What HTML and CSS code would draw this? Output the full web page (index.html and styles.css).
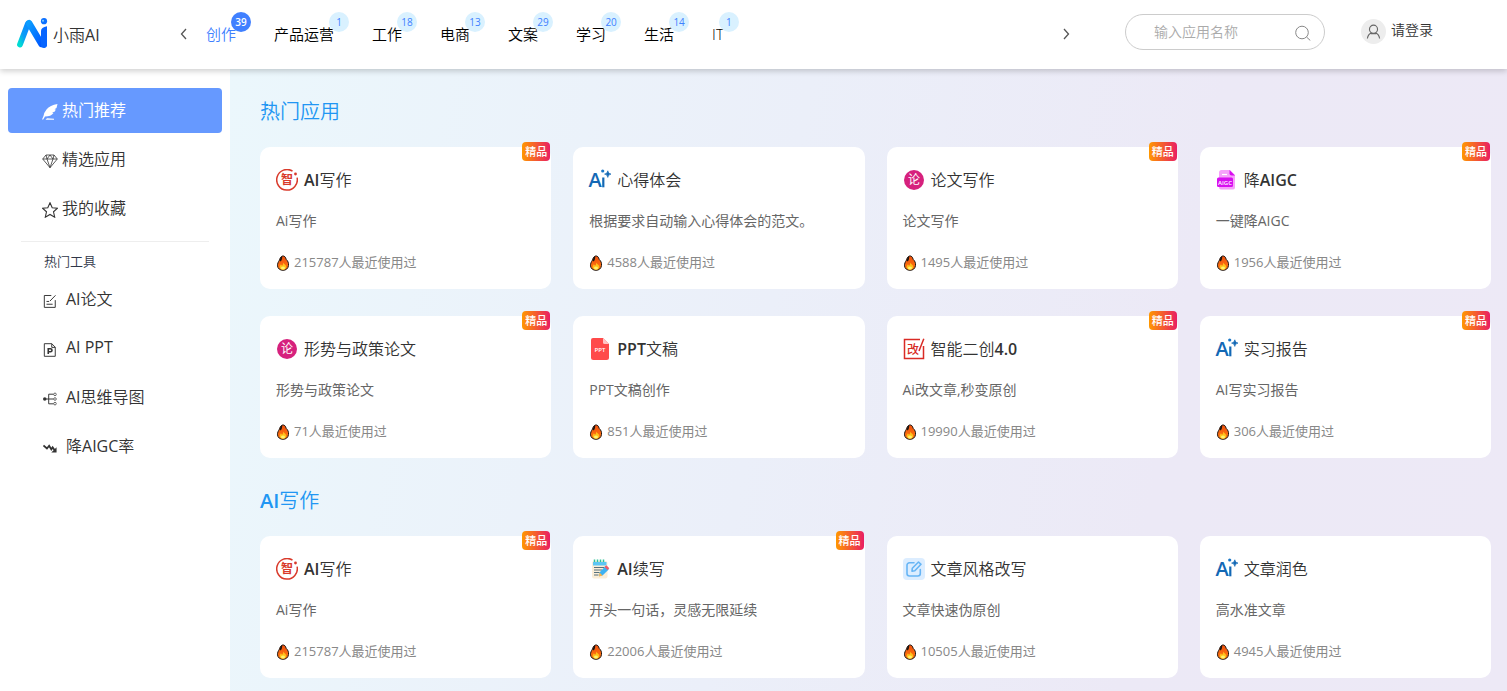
FILE: index.html
```html
<!DOCTYPE html>
<html lang="zh-CN">
<head>
<meta charset="utf-8">
<meta name="viewport" content="width=device-width, initial-scale=1">
<title>小雨AI</title>
<link rel="stylesheet" href="styles.css">
</head>
<body>
<svg class="sprite" aria-hidden="true">
  <defs>
    <linearGradient id="logo-left" x1="0" y1="1" x2="0.7" y2="0"><stop offset="0" stop-color="#00dcd2"/><stop offset="0.5" stop-color="#0a9df5"/><stop offset="1" stop-color="#0a8cff"/></linearGradient>
    <linearGradient id="logo-right" x1="0" y1="0" x2="1" y2="1"><stop offset="0" stop-color="#0a9dff"/><stop offset="1" stop-color="#0058ff"/></linearGradient>
    <linearGradient id="flame-fill" x1="0" y1="0" x2="0" y2="1"><stop offset="0" stop-color="#f0500c"/><stop offset="1" stop-color="#ff7a10"/></linearGradient>
  </defs>
  <symbol id="fire" viewBox="0 0 14 16">
    <path d="M6.500 1C8.500.6 9.600 2.200 10.200 4.400 12 6 12.800 8 12.500 10.500 12.200 13.500 10 15.300 7 15.300S1.700 13.500 1.500 10.800C1.400 8.500 2.300 7 3.200 5.500 3.900 4 4.300 1.800 6.500 1Z" fill="url(#flame-fill)" stroke="#1b1411" stroke-width="1"/>
    <path d="M6.300 1.300C4.200 2.200 4.300 4.200 3.500 5.600L4.700 6.600C5.900 5.300 6.200 3.500 6.300 1.300Z" fill="#1b1411"/>
    <path d="M7.300 7.500C8 9.300 10.500 10 10.200 12.300 9.900 14 8.500 14.700 7 14.700S3.800 13.900 3.700 12.300C3.600 11 4.400 10.300 4.900 9.300L6 10.800C6.900 10 7.200 9 7.300 7.500Z" fill="#ffc21a"/>
    <ellipse cx="7" cy="13" rx="2" ry="1.600" fill="#fff36b"/>
  </symbol>
  <symbol id="zhi" viewBox="0 0 22 22">
    <path d="M16.500 2.100A10.300 10.300 0 1 0 21.100 8.700" fill="none" stroke="#d93a2b" stroke-width="1.500"/>
    <circle cx="19.500" cy="5" r="1.400" fill="#d93a2b"/>
  </symbol>
  <symbol id="aiplus" viewBox="0 0 22 22">
    <path d="M14.300 8.500V18.300" stroke="#1368b5" stroke-width="2.200"/>
    <circle cx="13.700" cy="2" r="1.600" fill="#1b78c8"/>
    <path d="M18.800 1.800Q19.100 4.800 22 5.100 19.100 5.400 18.800 8.400 18.500 5.400 15.600 5.100 18.500 4.800 18.800 1.800Z" fill="#1368b5" stroke="#1368b5" stroke-width=".7"/>
  </symbol>
  <symbol id="lun" viewBox="0 0 22 22">
    <circle cx="11" cy="11" r="10" fill="#d6217d"/>
  </symbol>
  <symbol id="aigc" viewBox="0 0 22 22">
    <path d="M5.500 1H14L19 6V18.500A2 2 0 0 1 17 20.500H5A2 2 0 0 1 3 18.500V3.500A2.500 2.500 0 0 1 5.500 1Z" fill="#f6a0fa"/>
    <path d="M13.500 1 19 6.500H15.500A2 2 0 0 1 13.500 4.500Z" fill="#d80ff0"/>
    <path d="M6 5.500H11" stroke="#fff" stroke-width="1.200"/>
    <rect x="1" y="8.500" width="16" height="9.500" rx="1.500" fill="#d80ff0"/>
  </symbol>
  <symbol id="ppt" viewBox="0 0 22 22">
    <path d="M4 0H14L20 6V19.500A2.500 2.500 0 0 1 17.500 22H4.500A2.500 2.500 0 0 1 2 19.500V2A2 2 0 0 1 4 0Z" fill="#ff4a4a"/>
    <path d="M14 0 20 6H15.500A1.500 1.500 0 0 1 14 4.500Z" fill="#ffc4c4"/>
  </symbol>
  <symbol id="gai" viewBox="0 0 22 22">
    <path d="M17 1.500H1.500V20.500H20.500V8M20.800.8 16 13" fill="none" stroke="#d92b25" stroke-width="1.500"/>
  </symbol>
  <symbol id="note" viewBox="0 0 22 22">
    <rect x="3" y="3" width="15.500" height="17.500" rx="2" fill="#fbeed8"/>
    <rect x="4" y="4" width="13.500" height="3.500" fill="#5cc6f4"/>
    <path d="M5.500 1.500V4M8.500 1.500V4M11.500 1.500V4M14.500 1.500V4" stroke="#2fc29a" stroke-width="1.500"/>
    <path d="M5 9.500H15M5 12H13M5 14.500H10.500M5 17H9.500" stroke="#57707c" stroke-width="1"/>
    <path d="M16.200 8.300 19.700 11.500 13.500 17.600 10.300 18.300 10.500 14.500Z" fill="#3fb2f2"/>
    <path d="M10.500 14.500 13.500 17.600 10.100 18.400Z" fill="#ffb545"/>
    <path d="M15.500 9 17.300 7.200 20.300 10.200 18.600 12Z" fill="#f25a67"/>
  </symbol>
  <symbol id="rewrite" viewBox="0 0 22 22">
    <rect width="22" height="22" rx="4" fill="#dcedff"/>
    <path d="M11 4.800H6.500A2.500 2.500 0 0 0 4 7.300V15.500A2.500 2.500 0 0 0 6.500 18H14.800A2.500 2.500 0 0 0 17.300 15.500V11.500M9 13.200 9.300 10.300 15.500 4 18 6.300 11.800 12.800Z" fill="none" stroke="#67b5f5" stroke-width="1.600" stroke-linejoin="round" stroke-linecap="round"/>
  </symbol>
</svg>

<header class="topbar">
  <a class="brand" href="#">
    <svg class="brand-logo" viewBox="0 0 32 32" aria-hidden="true">
      <path d="M4 26.500 11.800 6" stroke="url(#logo-left)" stroke-width="5.800" stroke-linecap="round" fill="none"/>
      <path d="M13 5 25.500 26" stroke="url(#logo-right)" stroke-width="6.400" stroke-linecap="round" fill="none"/>
      <path d="M25 13Q25 9.300 31 8.300V26.500A3 3 0 0 1 25 27.500Z" fill="#0765ff"/>
      <circle cx="28" cy="3.200" r="3.100" fill="#0c70ff"/><circle cx="27" cy="2.800" r="1" fill="#7fd0ff"/>
    </svg>
    <span>小雨<span class="latin">AI</span></span>
  </a>
  <button class="arrow" type="button" aria-label="上一页"><svg viewBox="0 0 12 12"><path d="M8 1 3.500 6 8 11"/></svg></button>
  <nav class="tabs" aria-label="应用分类">
    <a class="tab tab-active" href="#">创作<span class="count">39</span></a>
    <a class="tab" href="#">产品运营<span class="count">1</span></a>
    <a class="tab" href="#">工作<span class="count">18</span></a>
    <a class="tab" href="#">电商<span class="count">13</span></a>
    <a class="tab" href="#">文案<span class="count">29</span></a>
    <a class="tab" href="#">学习<span class="count">20</span></a>
    <a class="tab" href="#">生活<span class="count">14</span></a>
    <a class="tab" href="#">IT<span class="count">1</span></a>
  </nav>
  <button class="arrow" type="button" aria-label="下一页"><svg viewBox="0 0 12 12"><path d="M4 1 8.500 6 4 11"/></svg></button>
  <form class="search" role="search">
    <input type="text" placeholder="输入应用名称" aria-label="输入应用名称">
    <button type="button" aria-label="搜索"><svg viewBox="0 0 16 16"><circle cx="7" cy="7.500" r="6.300"/><path d="M11.500 12 15.300 15.500"/></svg></button>
  </form>
  <a class="login" href="#">
    <span class="avatar"><svg viewBox="0 0 16 16"><circle cx="8" cy="5.500" r="4.300"/><path d="M1.500 15.500Q2 11 5.500 9.500M14.500 15.500Q14 11 10.500 9.500M5 10.300H11"/></svg></span>
    <span class="login-text">请登录</span>
  </a>
</header>

<div class="layout">
  <aside class="sidebar">
    <nav class="menu" aria-label="主菜单">
      <a class="menu-item menu-active" href="#"><svg viewBox="0 0 16 16"><path d="M15.500 0Q8 1 4.500 5.500 2 8.500 1.500 12L0 15.500 1.200 15.600 3 12.500Q9 12.500 11.500 9L10 8.800 12.800 7.500 13.800 5.500 12.500 5.300 14.500 4ZM5 14.200 12 14.700 12 15.700H3.500Z" fill="currentColor"/></svg><span>热门推荐</span></a>
      <a class="menu-item" href="#"><svg viewBox="0 0 16 16"><path d="M4 2H12L15.300 6 8 14.700.700 6ZM.700 6H15.300M4 2 5 6 8 14.700 11 6 12 2M5 6 8 2 11 6" class="thin"/></svg><span>精选应用</span></a>
      <a class="menu-item" href="#"><svg viewBox="0 0 16 16"><path d="M8 .8 10.200 5.700 15.500 6.200 11.500 9.800 12.700 15.200 8 12.500 3.300 15.200 4.500 9.800.5 6.200 5.800 5.700Z" class="line"/></svg><span>我的收藏</span></a>
    </nav>
    <hr class="rule">
    <h2 class="menu-title">热门工具</h2>
    <nav class="menu menu-tools" aria-label="热门工具">
      <a class="menu-item" href="#"><svg viewBox="0 0 16 16"><path d="M9.500 1.700H1.500V15.300H14V7M8 8 14.300 1.500M4 8.500H7M4 11.700H11" class="line"/></svg><span><span class="latin">AI</span>论文</span></a>
      <a class="menu-item" href="#"><svg viewBox="0 0 16 16"><path d="M1.500.8H10L14 4.800V15.200H1.500ZM10 .8V5H14" class="line"/><path d="M6 12.500V6.500H8.500Q10.300 6.500 10.300 8.200T8.500 10H6" fill="none" stroke="currentColor" stroke-width="1.800"/></svg><span class="latin">AI PPT</span></a>
      <a class="menu-item" href="#"><svg viewBox="0 0 16 16"><circle cx="2" cy="8" r="2" fill="currentColor"/><path d="M3 8H12M12 2.500H6.500V13.500H12" class="line"/><circle cx="13.700" cy="2.700" r="1.500" class="thin"/><circle cx="13.700" cy="8" r="1.500" class="thin"/><circle cx="13.700" cy="13.300" r="1.500" class="thin"/></svg><span><span class="latin">AI</span>思维导图</span></a>
      <a class="menu-item" href="#"><svg viewBox="0 0 16 16"><path d="M.5 5 4.500 8.500 7 5.500 9.500 9.500 11 7.300 14 11.500" fill="none" stroke="currentColor" stroke-width="2"/><path d="M15.500 7V13H9.500Z" fill="currentColor"/></svg><span>降<span class="latin">AIGC</span>率</span></a>
    </nav>
  </aside>

  <main class="content">
    <section class="group">
      <h2 class="group-title">热门应用</h2>
      <div class="cards">
        <article class="card"><span class="badge">精品</span><h3><svg viewBox="0 0 22 22"><use href="#zhi"/><text x="11" y="15" class="glyph-zhi">智</text></svg><span><b>AI</b>写作</span></h3><p class="desc">Ai写作</p><p class="used"><svg><use href="#fire"/></svg>215787人最近使用过</p></article>
        <article class="card"><h3><svg viewBox="0 0 22 22"><use href="#aiplus"/><text x="6" y="18" class="glyph-a">A</text></svg><span>心得体会</span></h3><p class="desc">根据要求自动输入心得体会的范文。</p><p class="used"><svg><use href="#fire"/></svg>4588人最近使用过</p></article>
        <article class="card"><span class="badge">精品</span><h3><svg viewBox="0 0 22 22"><use href="#lun"/><text x="11" y="15" class="glyph-lun">论</text></svg><span>论文写作</span></h3><p class="desc">论文写作</p><p class="used"><svg><use href="#fire"/></svg>1495人最近使用过</p></article>
        <article class="card"><span class="badge">精品</span><h3><svg viewBox="0 0 22 22"><use href="#aigc"/><text x="9" y="16" class="glyph-tag">AIGC</text></svg><span>降<b>AIGC</b></span></h3><p class="desc">一键降AIGC</p><p class="used"><svg><use href="#fire"/></svg>1956人最近使用过</p></article>
        <article class="card"><span class="badge">精品</span><h3><svg viewBox="0 0 22 22"><use href="#lun"/><text x="11" y="15" class="glyph-lun">论</text></svg><span>形势与政策论文</span></h3><p class="desc">形势与政策论文</p><p class="used"><svg><use href="#fire"/></svg>71人最近使用过</p></article>
        <article class="card"><h3><svg viewBox="0 0 22 22"><use href="#ppt"/><text x="11" y="14" class="glyph-tag">PPT</text></svg><span><b>PPT</b>文稿</span></h3><p class="desc">PPT文稿创作</p><p class="used"><svg><use href="#fire"/></svg>851人最近使用过</p></article>
        <article class="card"><span class="badge">精品</span><h3><svg viewBox="0 0 22 22"><use href="#gai"/><text x="10" y="16" class="glyph-gai">改</text></svg><span>智能二创<b>4.0</b></span></h3><p class="desc">Ai改文章,秒变原创</p><p class="used"><svg><use href="#fire"/></svg>19990人最近使用过</p></article>
        <article class="card"><span class="badge">精品</span><h3><svg viewBox="0 0 22 22"><use href="#aiplus"/><text x="6" y="18" class="glyph-a">A</text></svg><span>实习报告</span></h3><p class="desc">AI写实习报告</p><p class="used"><svg><use href="#fire"/></svg>306人最近使用过</p></article>
      </div>
    </section>
    <section class="group">
      <h2 class="group-title"><b>AI</b>写作</h2>
      <div class="cards">
        <article class="card"><span class="badge">精品</span><h3><svg viewBox="0 0 22 22"><use href="#zhi"/><text x="11" y="15" class="glyph-zhi">智</text></svg><span><b>AI</b>写作</span></h3><p class="desc">Ai写作</p><p class="used"><svg><use href="#fire"/></svg>215787人最近使用过</p></article>
        <article class="card"><span class="badge">精品</span><h3><svg><use href="#note"/></svg><span><b>AI</b>续写</span></h3><p class="desc">开头一句话，灵感无限延续</p><p class="used"><svg><use href="#fire"/></svg>22006人最近使用过</p></article>
        <article class="card"><h3><svg><use href="#rewrite"/></svg><span>文章风格改写</span></h3><p class="desc">文章快速伪原创</p><p class="used"><svg><use href="#fire"/></svg>10505人最近使用过</p></article>
        <article class="card"><h3><svg viewBox="0 0 22 22"><use href="#aiplus"/><text x="6" y="18" class="glyph-a">A</text></svg><span>文章润色</span></h3><p class="desc">高水准文章</p><p class="used"><svg><use href="#fire"/></svg>4945人最近使用过</p></article>
      </div>
    </section>
  </main>
</div>
</body>
</html>
```
FILE: styles.css
```css
* { box-sizing: border-box; }
body {
  margin: 0;
  min-height: 100vh;
  display: flex;
  flex-direction: column;
  background: #fff;
  color: #333;
  font-family: "Open Sans", "Noto Sans CJK SC", sans-serif;
  font-size: 16px;
  font-weight: 350;
}
a { color: inherit; text-decoration: none; }
b { font-weight: 600; }
button { padding: 0; border: 0; background: none; cursor: pointer; }
h2, h3, p { margin: 0; font-weight: inherit; }
.latin { font-weight: 400; }
.sprite { position: absolute; width: 0; height: 0; }

.topbar {
  position: relative;
  z-index: 1;
  display: flex;
  align-items: center;
  height: 69px;
  padding: 0 74px 2px 16px;
  background: #fff;
  box-shadow: 0 2px 6px rgba(0, 0, 0, 0.2);
}
.brand { display: flex; align-items: center; gap: 5px; width: 158px; }
.brand-logo { width: 32px; height: 32px; }
.arrow { width: 20px; height: 20px; }
.arrow svg { display: block; width: 12px; height: 12px; margin: 0 auto; fill: none; stroke: #555; stroke-width: 1.3; }
.tabs { flex: 1; display: flex; gap: 38px; padding-left: 12px; color: #000; font-size: 15px; line-height: 22px; }
.tab { position: relative; }
.tab-active { color: #4080ff; }
.count {
  position: absolute;
  top: -11px;
  right: -15px;
  width: 20px;
  border-radius: 50%;
  background: #d9f1ff;
  color: #4080ff;
  font-size: 10px;
  font-weight: 400;
  line-height: 20px;
  text-align: center;
}
.tab-active .count { background: #4080ff; color: #fff; font-weight: 600; }
.search {
  display: flex;
  align-items: center;
  width: 200px;
  height: 36px;
  margin: 0 36px 3px 49px;
  padding: 0 13px 0 28px;
  border: 1px solid #ccc;
  border-radius: 18px;
}
.search input { flex: 1; min-width: 0; padding: 0 0 2px; border: 0; outline: 0; background: none; font: inherit; font-size: 14px; }
.search input::placeholder { color: #aaa; }
.search svg { display: block; width: 16px; height: 16px; margin-top: 2px; fill: none; stroke: #888; }
.login { display: flex; align-items: center; gap: 5px; margin-bottom: 5px; font-size: 14px; }
.login-text { padding-bottom: 4px; }
.avatar { display: grid; place-items: center; width: 25px; height: 25px; border-radius: 50%; background: #ededed; }
.avatar svg { width: 15px; height: 15px; fill: none; stroke: #666; stroke-width: 1.2; }

.layout { flex: 1; display: flex; }
.sidebar { width: 230px; padding: 19px 8px 0; }
.menu { display: flex; flex-direction: column; gap: 4px; }
.menu-item { display: flex; align-items: center; gap: 4px; height: 45px; padding-left: 34px; border-radius: 4px; }
.menu-item svg { width: 16px; height: 16px; margin-top: 2px; }
.menu-item > span { padding-bottom: 3px; }
.menu-active { background: #6699ff; color: #fff; font-weight: 400; }
.menu-tools .menu-item { gap: 9px; padding-left: 35px; }
.menu-tools .menu-item svg { width: 14px; height: 14px; }
.line { fill: none; stroke: currentColor; stroke-width: 1.1; }
.thin { fill: none; stroke: currentColor; stroke-width: 0.8; }
.rule { height: 1px; margin: 10px 13px 9px; border: 0; background: #eee; }
.menu-title { margin-bottom: 6px; padding-left: 36px; color: #303648; font-size: 13px; line-height: 20px; }

.content {
  flex: 1;
  min-width: 0;
  display: flex;
  flex-direction: column;
  gap: 27px;
  padding: 27px 16px 13px 30px;
  background: linear-gradient(100deg, #ebf7fc, #ebeff9 42%, #ece9f6 72%, #ede9f6);
}
.group-title { padding-top: 1px; margin-bottom: 20px; color: #2196f3; font-size: 20px; line-height: 30px; }
.cards { display: grid; grid-template-columns: repeat(4, 1fr); gap: 27px 22px; }
.card { position: relative; padding: 20px 16px 18px; border-radius: 10px; background: #fff; }
.card h3 { display: flex; align-items: center; gap: 6px; font-size: 16px; line-height: 26px; }
.card h3 svg { width: 22px; height: 22px; overflow: visible; }
.card h3 text { text-anchor: middle; }
.desc { margin: 18px 0 23px; color: #666; font-size: 14px; font-weight: 400; line-height: 20px; }
.used { display: flex; align-items: center; gap: 4px; color: #888; font-size: 13px; font-weight: 400; line-height: 17px; }
.used svg { width: 14px; height: 16px; }
.badge {
  position: absolute;
  top: -5px;
  right: 1px;
  padding: 0 3px;
  border-radius: 4px;
  background: linear-gradient(to right, #ff9800, #e91e63);
  color: #fff;
  font-size: 11px;
  font-weight: 500;
  line-height: 19px;
}

.glyph-zhi { fill: #d93a2b; font: 700 12px "Noto Sans CJK SC", sans-serif; }
.glyph-a { fill: #1368b5; font: 600 20px "Open Sans", sans-serif; }
.glyph-lun { fill: #fff; font: 400 12px "Noto Sans CJK SC", sans-serif; }
.glyph-tag { fill: #fff; font: 600 6px "Open Sans", sans-serif; }
.glyph-gai { fill: #d92b25; font: 500 12px "Noto Sans CJK SC", sans-serif; }
```
